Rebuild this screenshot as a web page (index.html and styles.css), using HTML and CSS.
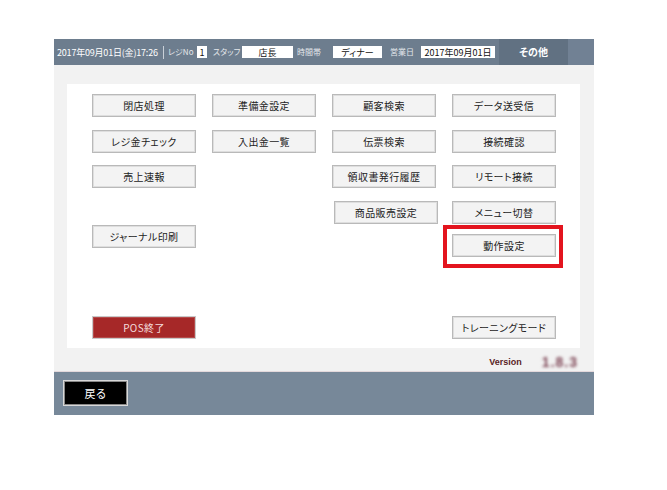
FILE: index.html
```html
<!DOCTYPE html>
<html lang="ja">
<head>
<meta charset="utf-8">
<title>その他</title>
<link rel="stylesheet" href="styles.css">
</head>
<body>
<div class="app">
  <header class="topbar">
    <span class="datetime">2017年09月01日(金)17:26</span>
    <span class="sep"></span>
    <span class="lbl lbl-reg">レジNo</span>
    <span class="box box-reg">1</span>
    <span class="lbl lbl-staff">スタッフ</span>
    <span class="box box-staff">店長</span>
    <span class="lbl lbl-time">時間帯</span>
    <span class="box box-time">ディナー</span>
    <span class="lbl lbl-biz">営業日</span>
    <span class="box box-date">2017年09月01日</span>
    <span class="tab">その他</span>
    <span class="tab-rest"></span>
  </header>

  <main class="content">
    <section class="panel">
      <div class="col">
        <button class="btn">閉店処理</button>
        <button class="btn">レジ金チェック</button>
        <button class="btn">売上速報</button>
        <button class="btn mt-journal">ジャーナル印刷</button>
        <button class="btn btn-red mt-pos">POS終了</button>
      </div>
      <div class="col">
        <button class="btn">準備金設定</button>
        <button class="btn">入出金一覧</button>
      </div>
      <div class="col">
        <button class="btn">顧客検索</button>
        <button class="btn">伝票検索</button>
        <button class="btn">領収書発行履歴</button>
        <button class="btn shift">商品販売設定</button>
      </div>
      <div class="col">
        <button class="btn">データ送受信</button>
        <button class="btn">接続確認</button>
        <button class="btn">リモート接続</button>
        <button class="btn">メニュー切替</button>
        <div class="highlight mt-action"><button class="btn">動作設定</button></div>
        <button class="btn mt-training">トレーニングモード</button>
      </div>
    </section>
    <div class="version">
      <span class="ver-label">Version</span>
      <span class="ver-num">1.8.3</span>
    </div>
  </main>

  <footer class="bottombar">
    <button class="back">戻る</button>
  </footer>
</div>
</body>
</html>
```

FILE: styles.css
```css
* { box-sizing: border-box; }

html, body {
  margin: 0;
  padding: 0;
  background: #ffffff;
}

body {
  font-family: "Noto Sans CJK JP", "Noto Sans", sans-serif;
  font-feature-settings: "palt";
}

.app {
  width: 540px;
  margin: 39px 0 0 54px;
}

/* ---------- header ---------- */
.topbar {
  height: 26px;
  background: #6d7d8e;
  display: flex;
  align-items: center;
  color: #ffffff;
  font-size: 9px;
  line-height: 1;
  white-space: nowrap;
}

.topbar > * { flex: none; }

.datetime {
  margin-left: 3px;
  width: 104px;
  letter-spacing: -0.2px;
  font-feature-settings: normal;
}

.sep {
  width: 1px;
  height: 13px;
  background: #c9d0d8;
  margin-left: 2px;
}

.lbl {
  color: #e4e8ec;
  font-size: 8px;
}

.lbl-reg { margin-left: 4px; width: 25px; }
.lbl-staff { margin-left: 6px; width: 23px; }
.lbl-time { margin-left: 4px; width: 24px; }
.lbl-biz { margin-left: 8px; width: 24px; }

.box {
  background: #ffffff;
  color: #111111;
  height: 12px;
  display: flex;
  align-items: center;
  justify-content: center;
  font-size: 9px;
}

.box-reg { margin-left: 4px; width: 10px; }
.box-staff { margin-left: 6px; width: 51px; }
.box-time { margin-left: 12px; width: 49px; }
.box-date { margin-left: 7px; width: 74px; font-feature-settings: normal; }

.tab {
  margin-left: 4px;
  width: 69px;
  height: 26px;
  background: #617182;
  display: flex;
  align-items: center;
  justify-content: center;
  font-weight: bold;
  font-size: 10px;
}

.tab-rest {
  flex: 1 1 auto !important;
  height: 26px;
  background: #718194;
}

/* ---------- content ---------- */
.content {
  background: #f2f2f2;
  height: 306px;
  padding: 19px 14px 0 13px;
}

.panel {
  background: #ffffff;
  height: 264px;
  padding: 10px 0 0 25px;
  display: flex;
  gap: 16px;
}

.col {
  width: 104px;
  display: flex;
  flex-direction: column;
  gap: 12.5px;
}

.btn {
  flex: none;
  display: flex;
  align-items: center;
  justify-content: center;
  width: 104px;
  height: 23px;
  margin: 0;
  padding: 0;
  background: #f3f3f3;
  border: 1px solid #b9b9b9;
  box-shadow: inset 0 0 0 1px #dedede;
  font-family: "Noto Sans CJK JP", "Noto Sans", sans-serif;
  font-feature-settings: "palt";
  font-size: 10px;
  color: #222222;
  letter-spacing: 0.4px;
}

.btn-red {
  background: #a62828;
  color: #f4dede;
  border-color: #c9c9c9;
  box-shadow: inset 0 0 0 1px #b44a4a;
  font-size: 10px;
}

.shift { margin-left: 2px; }

.mt-journal { margin-top: 24.5px; }
.mt-pos { margin-top: 55.5px; }
.mt-action { margin-top: -2px; }
.mt-training { margin-top: 46.5px; }

.highlight {
  flex: none;
  position: relative;
  width: 104px;
  height: 23px;
}

.highlight::after {
  content: "";
  position: absolute;
  top: -9px;
  left: -9px;
  right: -7px;
  bottom: -11px;
  border: 4px solid #e3141e;
  pointer-events: none;
}

.version {
  height: 23px;
  display: flex;
  align-items: center;
  justify-content: flex-end;
  padding: 4px 2px 0 0;
}

.ver-label {
  font-family: "Liberation Sans", Arial, sans-serif;
  font-weight: bold;
  font-size: 9px;
  color: #5a1f26;
  margin-right: 20px;
}

.ver-num {
  font-family: "Liberation Sans", Arial, sans-serif;
  font-weight: bold;
  font-size: 14px;
  letter-spacing: 1px;
  color: #7e4656;
  filter: blur(1.6px);
}

/* ---------- footer ---------- */
.bottombar {
  height: 44px;
  background: #778899;
  border-top: 1px solid #e4d9dc;
  padding: 8px 0 0 9px;
}

.back {
  width: 65px;
  height: 26px;
  margin: 0;
  padding: 0;
  background: #000000;
  border: 1px solid #d8d8d8;
  box-shadow: inset 0 0 0 1px #888888;
  color: #ffffff;
  font-family: "Noto Sans CJK JP", "Noto Sans", sans-serif;
  font-size: 11px;
  display: flex;
  align-items: center;
  justify-content: center;
}
```
